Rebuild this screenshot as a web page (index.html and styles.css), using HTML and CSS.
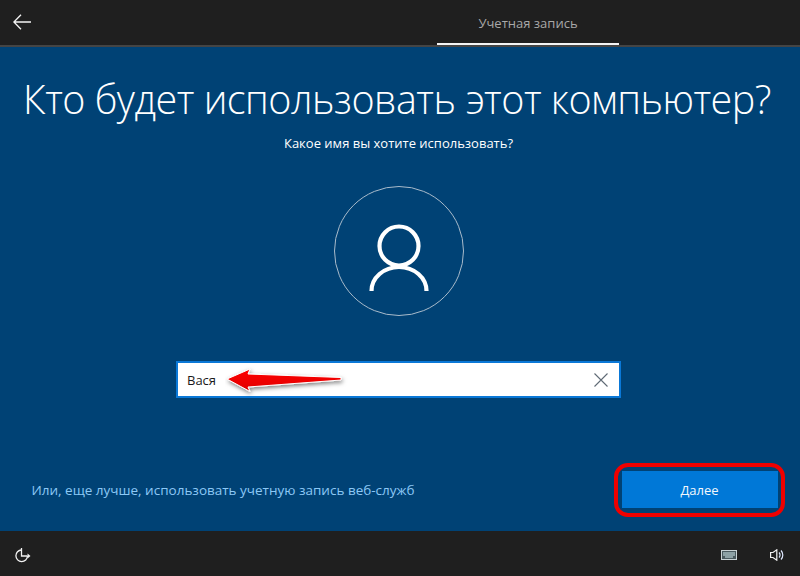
FILE: index.html
```html
<!DOCTYPE html>
<html lang="ru">
<head>
<meta charset="utf-8">
<title>Учетная запись</title>
<link rel="stylesheet" href="styles.css">
</head>
<body>
<div class="page">
  <header class="topbar">
    <div class="back">
      <svg class="back-icon" width="18" height="16" viewBox="0 0 18 16"><path d="M8 .7.9 8l7.100 7.300M.9 8H18" fill="none" stroke="#f4f4f4" stroke-width="1.300"/></svg>
    </div>
    <div class="tab">Учетная запись</div>
  </header>
  <main class="main">
    <h1 class="title">Кто будет использовать этот компьютер?</h1>
    <p class="subtitle">Какое имя вы хотите использовать?</p>
    <div class="avatar">
      <svg width="60" height="70" viewBox="0 0 60 70"><circle cx="30" cy="23" r="19.5" fill="none" stroke="#fff" stroke-width="4.200"/><path d="M2.500 68a27.500 24 0 0 1 55 0" fill="none" stroke="#fff" stroke-width="4.200"/></svg>
    </div>
    <div class="field">
      <span class="field-value">Вася</span>
      <svg class="clear" width="14" height="14" viewBox="0 0 14 14"><path d="M.5.5l13 13M13.500.5l-13 13" stroke="#5f6a75" stroke-width="1.100" fill="none"/></svg>
      <svg class="pointer" width="124" height="32" viewBox="0 0 124 32">
        <defs><linearGradient id="redfill" x1="0" y1="0" x2="0" y2="1"><stop offset="0" stop-color="#ff0000"/><stop offset="1" stop-color="#e00000"/></linearGradient>
        <filter id="sh" x="-10%" y="-40%" width="120%" height="190%"><feDropShadow dx="1" dy="2" stdDeviation="2" flood-color="#000" flood-opacity=".5"/></filter></defs>
        <path d="M2 14 25 4l-2 5 93 3.500v2.500L23 22l2 4.500Z" fill="url(#redfill)" stroke="#fff" stroke-width="1" filter="url(#sh)"/>
      </svg>
    </div>
    <div class="actions">
      <a class="link">Или, еще лучше, использовать учетную запись веб-служб</a>
      <div class="next-wrap">
        <button class="next">Далее</button>
        <span class="ring"></span>
      </div>
    </div>
  </main>
  <footer class="bottombar">
    <svg width="18" height="16" viewBox="0 0 18 16"><path d="M7.500 3a5.800 5.800 0 1 0 6 6" fill="none" stroke="#f2f2f2" stroke-width="1.300"/><path d="M7.500 1v8h6" fill="none" stroke="#f2f2f2" stroke-width="1.300"/><path d="m13.500 6.500 3 2.500-3 2.500z" fill="#f2f2f2"/></svg>
    <div class="tray">
      <svg width="16" height="10" viewBox="0 0 16 10"><rect x=".5" y=".5" width="15" height="9" fill="#4a5a5f" stroke="#c9d3d6"/><path d="M2 3h12M2 5h12M4 7h8" stroke="#cfe8ec" stroke-width="1"/></svg>
      <svg width="14" height="12" viewBox="0 0 14 12"><path d="M.6 3.500h2.400L6.800.8v10.400L3 8.500H.6z" fill="none" stroke="#f2f2f2" stroke-width="1.200"/><path d="M9 3.500a3.500 3.500 0 0 1 0 5M11 1.500a6.500 6.500 0 0 1 0 9" fill="none" stroke="#dfe9ff" stroke-width="1.200"/></svg>
    </div>
  </footer>
</div>
</body>
</html>
```

FILE: styles.css
```css
* { box-sizing: border-box; }
html, body { margin: 0; padding: 0; }
body { font-family: "Open Sans", "Noto Sans", sans-serif; }
.page {
  width: 800px;
  height: 576px;
  display: flex;
  flex-direction: column;
  overflow: hidden;
  background: #004275;
}
.topbar {
  flex: 0 0 45px;
  background: #1f1f1f;
  border-bottom: 2px solid #444;
  display: flex;
  position: relative;
}
.back {
  width: 437px;
  padding: 14px 0 0 13px;
}
.back-icon { display: block; }
.tab {
  width: 182px;
  height: 45px;
  border-bottom: 2px solid #f4f4f4;
  padding-top: 14px;
  font-size: 13px;
  line-height: 18px;
  color: #a8a8a8;
  text-align: center;
}
.main {
  flex: 1;
  display: flex;
  flex-direction: column;
  align-items: center;
  padding: 24px 3px 0 0;
}
.title {
  margin: 0 3px 0 0;
  font-size: 39.500px;
  letter-spacing: -0.5px;
  line-height: 56px;
  font-weight: 300;
  color: #fff;
  white-space: nowrap;
}
.subtitle {
  margin: 7px 0 0;
  font-size: 13px;
  line-height: 18px;
  color: #fff;
}
.avatar {
  width: 130px;
  height: 130px;
  margin-top: 34px;
  border: 1px solid #a9bbcb;
  border-radius: 50%;
  display: flex;
  align-items: center;
  justify-content: center;
  padding-top: 14px;
}
.field {
  width: 445px;
  height: 37px;
  margin-top: 45px;
  background: #fff;
  border: 2px solid #0a78d7;
  display: flex;
  align-items: center;
  justify-content: space-between;
  padding: 0 11px 0 9px;
  position: relative;
}
.field-value {
  font-size: 13px;
  color: #1a1a1a;
}
.pointer {
  position: absolute;
  left: 47px;
  top: 2px;
}
.actions {
  width: 100%;
  margin: 73px -3px 0 0;
  padding: 0 21px 0 30px;
  display: flex;
  align-items: center;
  justify-content: space-between;
}
.link {
  font-size: 13.500px;
  font-weight: 500;
  color: #8cc8f5;
}
.next-wrap { position: relative; display: block; }
.next {
  display: block;
  width: 156px;
  height: 37px;
  border: 0;
  background: #0078d7;
  color: #f2f7fc;
  font-family: inherit;
  font-size: 13px;
  font-weight: 500;
}
.ring {
  position: absolute;
  left: -8px;
  top: -8px;
  width: 171px;
  height: 54px;
  border: 4px solid #f00000;
  border-radius: 14px;
}
.bottombar {
  flex: 0 0 45px;
  background: #1f1f1f;
  display: flex;
  align-items: center;
  justify-content: space-between;
  padding: 3px 16px 0 14px;
}
.tray {
  display: flex;
  align-items: center;
  gap: 33px;
}
```
